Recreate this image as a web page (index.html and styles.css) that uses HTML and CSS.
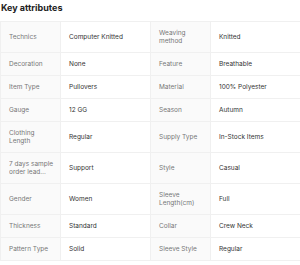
FILE: index.html
```html
<!DOCTYPE html>
<html lang="en">
<head>
    <meta charset="UTF-8">
    <meta name="viewport" content="width=device-width, initial-scale=1.0">
    <title>Key attributes</title>
    <link rel="stylesheet" href="styles.css">
</head>
<body>

<div class="attributes">
    <h2 class="title">Key attributes</h2>
    <table class="attr-table">
        <colgroup>
            <col class="col-label">
            <col class="col-value">
            <col class="col-label">
            <col class="col-value">
        </colgroup>
        <tr>
            <td class="label">Technics</td>
            <td class="value">Computer Knitted</td>
            <td class="label">Weaving method</td>
            <td class="value">Knitted</td>
        </tr>
        <tr>
            <td class="label">Decoration</td>
            <td class="value">None</td>
            <td class="label">Feature</td>
            <td class="value">Breathable</td>
        </tr>
        <tr>
            <td class="label">Item Type</td>
            <td class="value">Pullovers</td>
            <td class="label">Material</td>
            <td class="value">100% Polyester</td>
        </tr>
        <tr>
            <td class="label">Gauge</td>
            <td class="value">12 GG</td>
            <td class="label">Season</td>
            <td class="value">Autumn</td>
        </tr>
        <tr>
            <td class="label">Clothing Length</td>
            <td class="value">Regular</td>
            <td class="label">Supply Type</td>
            <td class="value">In-Stock Items</td>
        </tr>
        <tr>
            <td class="label"><span class="clamp">7 days sample order lead time</span></td>
            <td class="value">Support</td>
            <td class="label">Style</td>
            <td class="value">Casual</td>
        </tr>
        <tr>
            <td class="label">Gender</td>
            <td class="value">Women</td>
            <td class="label">Sleeve Length(cm)</td>
            <td class="value">Full</td>
        </tr>
        <tr>
            <td class="label">Thickness</td>
            <td class="value">Standard</td>
            <td class="label">Collar</td>
            <td class="value">Crew Neck</td>
        </tr>
        <tr>
            <td class="label">Pattern Type</td>
            <td class="value">Solid</td>
            <td class="label">Sleeve Style</td>
            <td class="value">Regular</td>
        </tr>
    </table>
</div>

</body>
</html>
```

FILE: styles.css
```css
body {
    font-family: Inter, "Noto Sans", sans-serif;
    margin: 0;
    padding: 0;
    background-color: #ffffff;
}

.attributes {
    width: 299px;
    padding: 0;
}

.title {
    margin: 0;
    padding: 2px 0 0 1px;
    height: 21px;
    box-sizing: border-box;
    font-size: 9px;
    font-weight: 700;
    color: #222222;
    line-height: 12px;
}

.attr-table {
    width: 299px;
    border-collapse: collapse;
    table-layout: fixed;
    font-size: 6.5px;
    line-height: 8px;
}

.col-label {
    width: 60px;
}

.col-value {
    width: 90px;
}

.attr-table td {
    border: 1px solid #f0f0f0;
    padding: 7px 8px 7px 8px;
    vertical-align: middle;
}

.label {
    background-color: #fafafa;
    color: #777777;
}

.value {
    color: #333333;
}

.clamp {
    display: -webkit-box;
    -webkit-line-clamp: 2;
    -webkit-box-orient: vertical;
    overflow: hidden;
    margin-right: -2px;
}
```
